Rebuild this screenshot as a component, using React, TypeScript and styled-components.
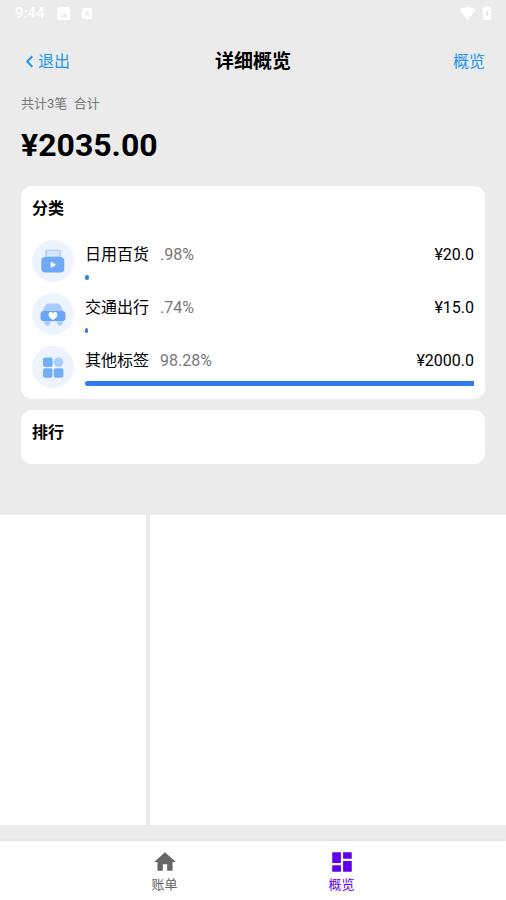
import React from 'react';
import styled, { createGlobalStyle } from 'styled-components';

const GlobalStyle = createGlobalStyle`
  *, *::before, *::after { box-sizing: border-box; }
  body {
    margin: 0;
    background: #ebebeb;
    color: #000;
    font-family: Roboto, "Noto Sans CJK SC", sans-serif;
  }
  button { font-family: inherit; }
`;

const Page = styled.div`
  display: flex;
  flex-direction: column;
  min-height: 100vh;
`;

const StatusBar = styled.div`
  display: flex;
  align-items: center;
  justify-content: space-between;
  height: 26px;
  padding: 0 15px;
  color: #fff;
  font-size: 15px;
  font-weight: 500;
  line-height: 26px;
`;

const StatusGroup = styled.div<{ $gap: number }>`
  display: flex;
  align-items: center;
  gap: ${({ $gap }) => $gap}px;
  svg { display: block; }
`;

const Header = styled.header`
  display: grid;
  grid-template-columns: 1fr auto 1fr;
  align-items: center;
  height: 70px;
  padding: 2px 21px 0;
`;

const Title = styled.h1`
  margin: 0;
  font-size: 19px;
  font-weight: 700;
  line-height: 28px;
`;

const TextButton = styled.button<{ $align: 'start' | 'end' }>`
  display: flex;
  align-items: center;
  justify-self: ${({ $align }) => $align};
  padding: 0;
  border: 0;
  background: none;
  color: #2196f3;
  font-size: 16px;
  line-height: 24px;
  cursor: pointer;
`;

const Content = styled.main`
  display: flex;
  flex-direction: column;
  padding: 0 21px;
`;

const Caption = styled.p`
  margin: 0;
  color: #777;
  font-size: 13px;
  line-height: 16px;
  white-space: pre;
`;

const Total = styled.p`
  margin: 12px 0 19px;
  font-size: 32px;
  font-weight: 700;
  line-height: 43px;
`;

const Card = styled.section`
  padding: 12px 11px 11px;
  border-radius: 11px;
  background: #fff;
  & + & { margin-top: 11px; }
`;

const CardTitle = styled.h2`
  margin: 0;
  font-size: 16px;
  font-weight: 700;
  line-height: 21px;
`;

const List = styled.ul`
  display: flex;
  flex-direction: column;
  gap: 11px;
  margin: 0;
  padding: 21px 0 0;
  list-style: none;
  &:empty { padding-top: 10px; }
`;

const Row = styled.li`
  display: flex;
  gap: 11px;
`;

const IconCircle = styled.div`
  flex: none;
  width: 42px;
  height: 42px;
  border-radius: 50%;
  background: #edf4ff;
  svg { display: block; }
`;

const RowBody = styled.div`
  flex: 1;
  min-width: 0;
`;

const RowText = styled.div`
  display: flex;
  align-items: center;
  height: 29px;
  font-size: 16px;
  line-height: 29px;
`;

const Percent = styled.span`
  margin-left: 11px;
  color: #777;
`;

const Amount = styled.span`
  margin-left: auto;
`;

const Track = styled.div`
  margin-top: 6px;
  height: 5px;
`;

const Fill = styled.div`
  height: 5px;
  border-radius: 3px 0 0 3px;
  background: #2f7bf0;
  &[data-small='true'] { border-radius: 3px; }
`;

const Panels = styled.div`
  flex: 1;
  display: grid;
  grid-template-columns: 146fr 356fr;
  gap: 4px;
  min-height: 160px;
  margin: 51px 0 16px;
`;

const Panel = styled.section`
  background: #fff;
`;

const Nav = styled.nav`
  display: flex;
  justify-content: center;
  height: 59px;
  background: #fff;
  box-shadow: 0 -1px 3px rgba(0, 0, 0, 0.05);
`;

const NavButton = styled.button<{ $active?: boolean }>`
  display: flex;
  flex: 1;
  flex-direction: column;
  align-items: center;
  gap: 1px;
  max-width: 177px;
  padding: 8px 0 0;
  border: 0;
  background: none;
  color: ${({ $active }) => ($active ? '#6200ee' : '#666')};
  font-size: 13px;
  line-height: 18px;
  cursor: pointer;
  svg { display: block; }
`;

const PictureIcon = () => (
  <svg width="13" height="13" viewBox="0 0 13 13" aria-hidden="true">
    <rect width="13" height="13" rx="1.5" fill="#fff" />
    <path d="M2.2 10.2 4.5 7.3 6 9 8.2 6.2 11 10.2Z" fill="#ebebeb" />
  </svg>
);

const LetterIcon = () => (
  <svg width="10" height="11" viewBox="0 0 10 11" aria-hidden="true">
    <rect width="10" height="11" rx="1.5" fill="#fff" />
    <path d="M2.8 8.3 5 3l2.2 5.3M3.6 6.7h2.8" fill="none" stroke="#e4e4e4" strokeWidth="1" />
  </svg>
);

const WifiIcon = () => (
  <svg width="17" height="13" viewBox="0 0 17 13" aria-hidden="true">
    <path d="M0 2.8Q8.5-2.8 17 2.8L8.5 13Z" fill="#fff" />
  </svg>
);

const BatteryIcon = () => (
  <svg width="8" height="14" viewBox="0 0 8 14" aria-hidden="true">
    <path d="M2.5 0h3v1.3H7q1 0 1 1V13q0 1-1 1H1q-1 0-1-1V2.3q0-1 1-1h1.5Z" fill="#fff" />
    <path d="M4.7 3.8 2.3 8h1.5v3.2L6 7H4.6Z" fill="#dedede" />
  </svg>
);

const BackIcon = () => (
  <svg width="17" height="16" viewBox="0 0 17 16" aria-hidden="true">
    <path d="M11.3 2.3 6.2 7.500l5.100 5.200" fill="none" stroke="#2196f3" strokeWidth="2" />
  </svg>
);

const GoodsIcon = () => (
  <svg width="42" height="42" viewBox="0 0 42 42" aria-hidden="true">
    <path d="M13 17v-5.500q0-2 2-2h12q2 0 2 2V17Z" fill="#b5d2fc" />
    <path d="M15 11.300h12v4.700H15Z" fill="#dceafe" />
    <path d="M15 13.700h12" stroke="#c8defd" />
    <rect x="9.300" y="17" width="23" height="15.500" rx="4" fill="#6fa9f7" />
    <path d="M19.200 22.200 23.400 24.700 19.200 27.200Z" fill="#fff" stroke="#fff" strokeWidth="1" strokeLinejoin="round" />
  </svg>
);

const CarIcon = () => (
  <svg width="42" height="42" viewBox="0 0 42 42" aria-hidden="true">
    <path d="M12 28.500h6v1.500a2.700 2.700 0 0 1-5.400 0ZM24.600 28.500h6v1.500a2.700 2.700 0 0 1-5.400 0Z" fill="#a9cbfb" />
    <path d="M10.500 19 12.300 14q1.200-3.500 5-3.500h7.400q3.800 0 5 3.500l1.800 5Z" fill="#a9cbfb" />
    <rect x="8.500" y="18" width="25" height="10.300" rx="3.500" fill="#69a5f7" />
    <path d="M21 27c-6-2.800-5-8-2.300-8 1.200 0 2 .6 2.300 1.200.3-.6 1.100-1.200 2.300-1.200 2.700 0 3.700 5.200-2.300 8Z" fill="#fff" />
  </svg>
);

const TagIcon = () => (
  <svg width="42" height="42" viewBox="0 0 42 42" aria-hidden="true">
    <g fill="#74adf8">
      <rect x="11" y="11.500" width="9.600" height="9.600" rx="2" />
      <rect x="11" y="22.300" width="9.600" height="9.400" rx="2" />
      <rect x="21.800" y="22.300" width="9.600" height="9.400" rx="2" />
    </g>
    <circle cx="26.500" cy="16.200" r="4.800" fill="#a9cdfc" />
  </svg>
);

const HomeIcon = () => (
  <svg width="26" height="26" viewBox="0 0 24 24" fill="currentColor" aria-hidden="true">
    <path d="M10 20v-6h4v6h5v-8h3L12 3 2 12h3v8z" />
  </svg>
);

const DashboardIcon = () => (
  <svg width="26" height="26" viewBox="0 0 24 24" fill="currentColor" aria-hidden="true">
    <path d="M3 13h8V3H3v10zm0 8h8v-6H3v6zm10 0h8V11h-8v10zm0-18v6h8V3h-8z" />
  </svg>
);

const categories = [
  { name: '日用百货', percent: '.98%', share: 0.98, amount: '¥20.0', Icon: GoodsIcon },
  { name: '交通出行', percent: '.74%', share: 0.74, amount: '¥15.0', Icon: CarIcon },
  { name: '其他标签', percent: '98.28%', share: 100, amount: '¥2000.0', Icon: TagIcon },
];

export default function App() {
  return (
    <Page lang="zh-CN">
      <GlobalStyle />
      <StatusBar>
        <StatusGroup $gap={12}>
          <span>9:44</span>
          <PictureIcon />
          <LetterIcon />
        </StatusGroup>
        <StatusGroup $gap={7}>
          <WifiIcon />
          <BatteryIcon />
        </StatusGroup>
      </StatusBar>
      <Header>
        <TextButton type="button" $align="start">
          <BackIcon />
          退出
        </TextButton>
        <Title>详细概览</Title>
        <TextButton type="button" $align="end">概览</TextButton>
      </Header>
      <Content>
        <Caption>共计3笔  合计</Caption>
        <Total>¥2035.00</Total>
        <Card>
          <CardTitle>分类</CardTitle>
          <List>
            {categories.map(({ name, percent, share, amount, Icon }) => (
              <Row key={name}>
                <IconCircle><Icon /></IconCircle>
                <RowBody>
                  <RowText>
                    <span>{name}</span>
                    <Percent>{percent}</Percent>
                    <Amount>{amount}</Amount>
                  </RowText>
                  <Track>
                    <Fill data-small={share < 2} style={{ width: `${share}%` }} />
                  </Track>
                </RowBody>
              </Row>
            ))}
          </List>
        </Card>
        <Card>
          <CardTitle>排行</CardTitle>
          <List />
        </Card>
      </Content>
      <Panels>
        <Panel />
        <Panel />
      </Panels>
      <Nav>
        <NavButton type="button">
          <HomeIcon />
          账单
        </NavButton>
        <NavButton type="button" $active aria-current="page">
          <DashboardIcon />
          概览
        </NavButton>
      </Nav>
    </Page>
  );
}
